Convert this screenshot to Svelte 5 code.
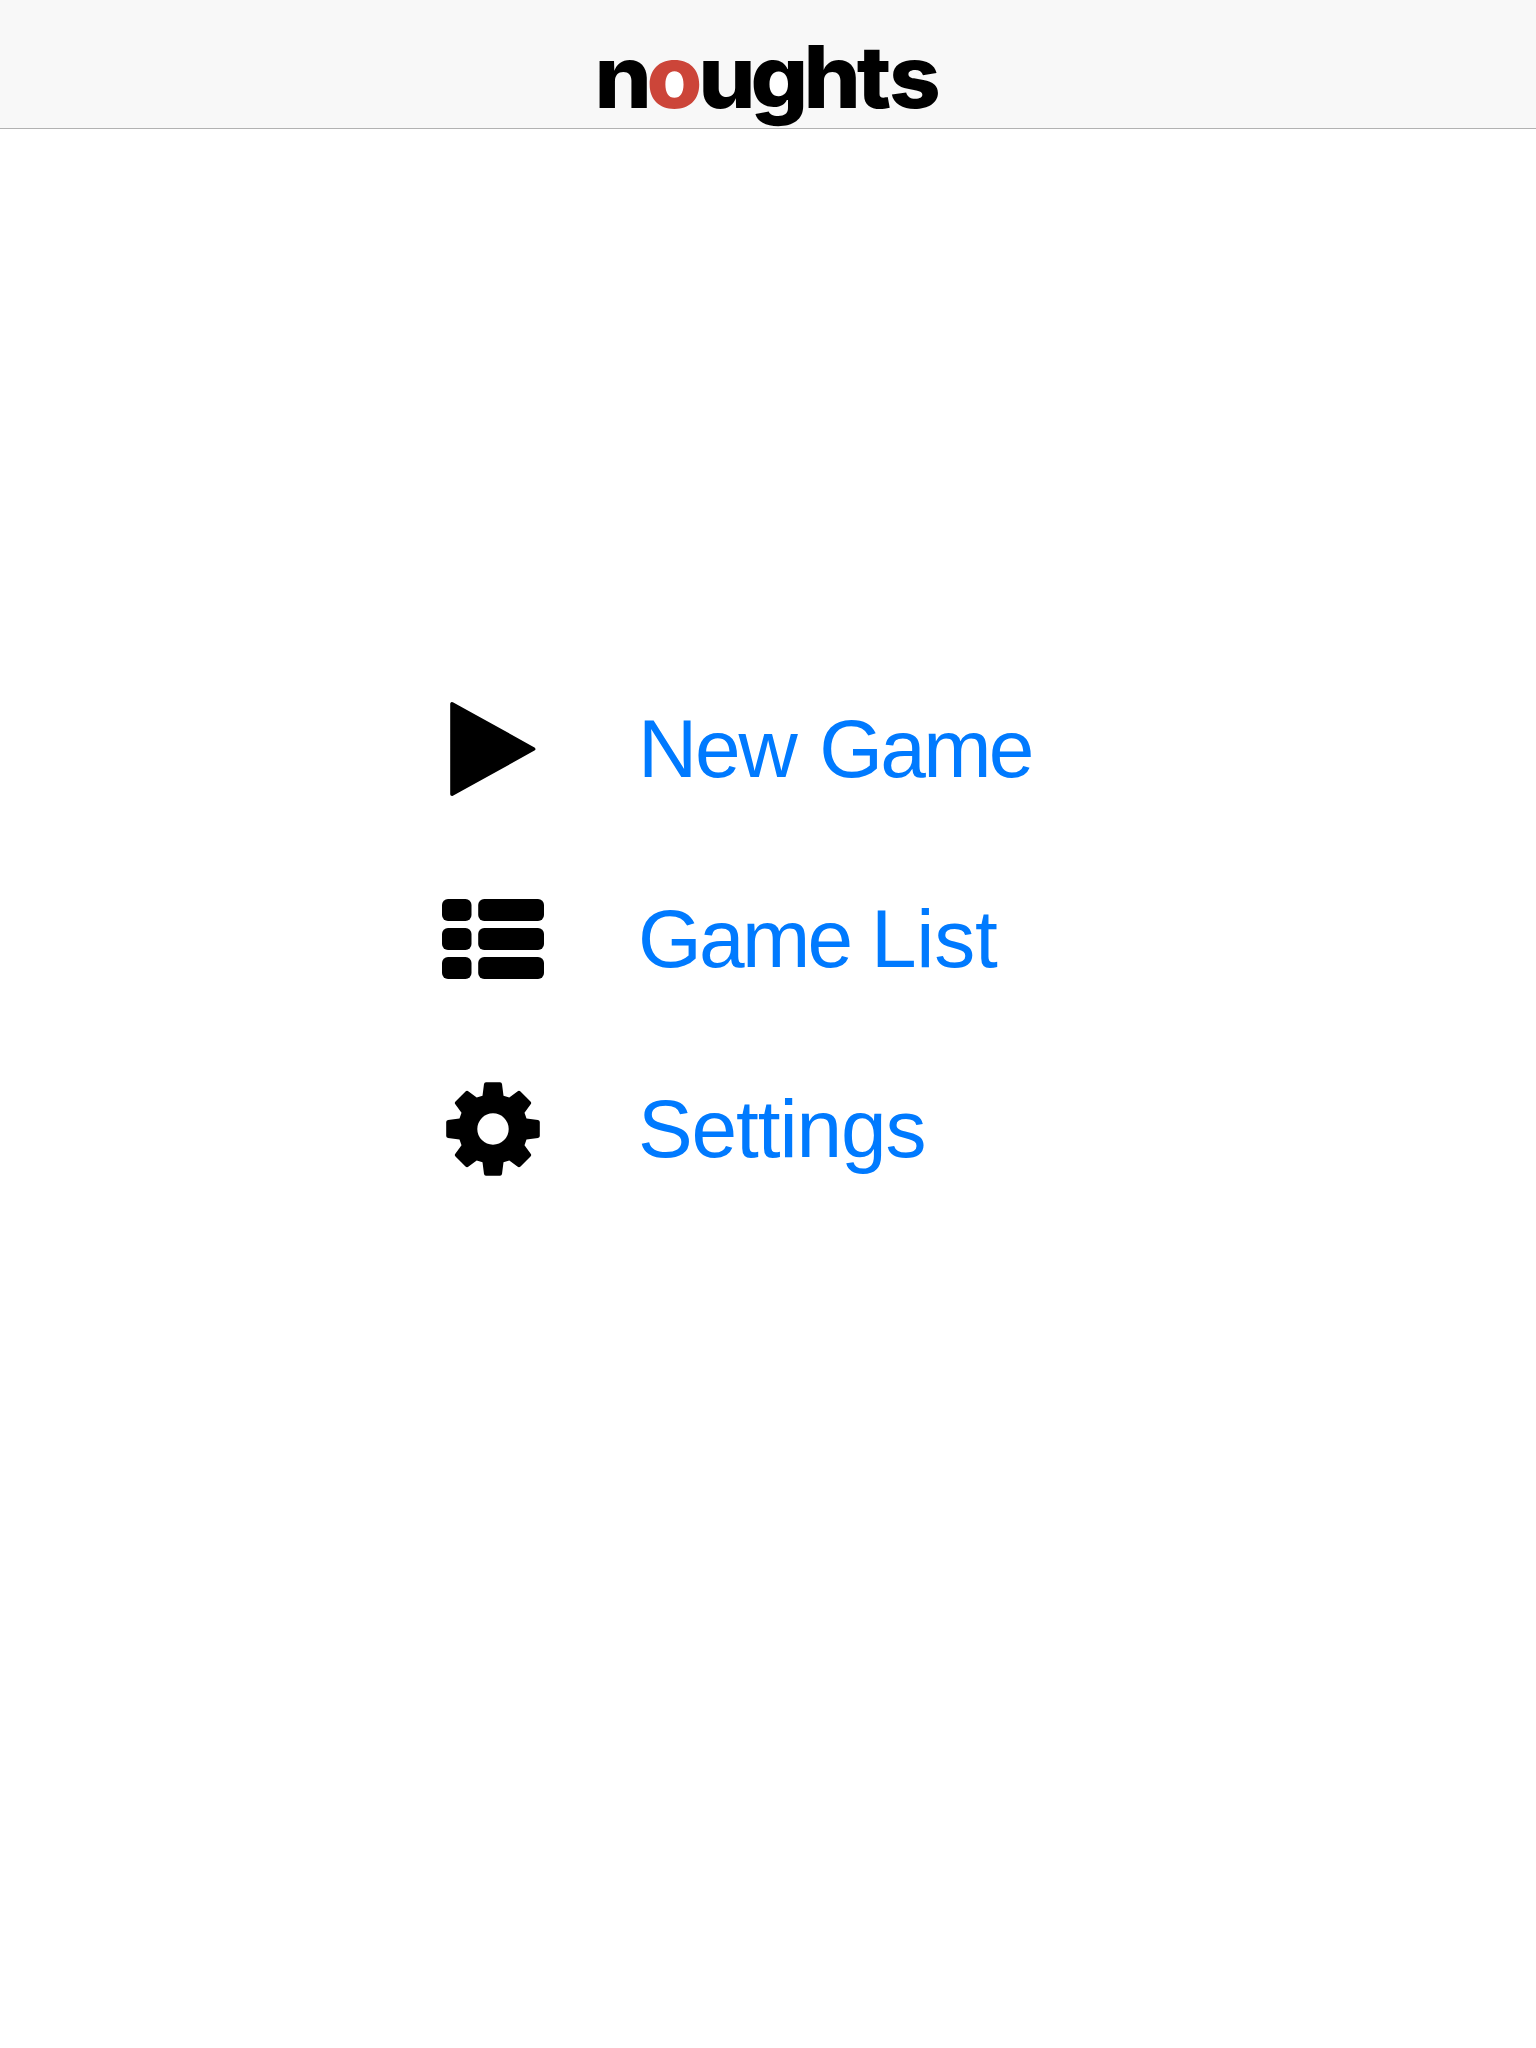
<script>
  // Left edges of the wordmark's letters, in the logo's own coordinates.
  const stretch = 1.05;
  const xs = [14.5, 66.5, 118.2, 170.5, 223.5, 276.8, 309].map((x) => x / stretch).join(' ');
  const items = [
    { words: ['New', 'Game'], icon: 'play' },
    { words: ['Game', 'List'], icon: 'list' },
    { words: ['Settings'], icon: 'gear' }
  ];
  const listRows = [-40, -11, 18];
</script>

<div class="page">
  <header>
    <svg class="logo" width="376" height="128" viewBox="0 0 376 128" role="img" aria-label="noughts">
      <ellipse cx="94.7" cy="84.5" rx="13" ry="15" fill="#fff" />
      <ellipse cx="197.5" cy="82.5" rx="12" ry="13" fill="#fff" />
      <text x={xs} y="108" transform="scale({stretch} 1)">n<tspan class="red">o</tspan>ughts</text>
    </svg>
  </header>
  <nav>
    {#each items as item}
      <a href="#{item.icon}">
        <svg class="icon" width="120" height="120" viewBox="-60 -60 120 120" aria-hidden="true">
          {#if item.icon === 'play'}
            <path d="M-41-45.2V45.2L40.6 0Z" stroke="#000" stroke-width="3.6" stroke-linejoin="round" />
          {:else if item.icon === 'list'}
            {#each listRows as y}
              <rect x="-51" {y} width="29.5" height="22" rx="6" />
              <rect x="-14.8" {y} width="65.8" height="22" rx="6" />
            {/each}
          {:else}
            <path
              fill-rule="evenodd"
              d="M-7-46.8H7Q8.7-46.8 9-45L10.5-33.3L16.3-31.5L24.4-37.5Q26-38.9 27.5-37.5L37.5-27.5Q38.9-26 37.5-24.4L31.5-16.3L33.5-10.5L45-9Q46.8-8.7 46.8-7V7Q46.8 8.7 45 9L33.5 10.5L31.5 16.3L37.5 24.4Q38.9 26 37.5 27.5L27.5 37.5Q26 38.9 24.4 37.5L16.3 31.5L10.5 33.3L9 45Q8.7 46.8 7 46.8H-7Q-8.7 46.8-9 45L-10.5 33.3L-16.3 31.5L-24.4 37.5Q-26 38.9-27.5 37.5L-37.5 27.5Q-38.9 26-37.5 24.4L-31.5 16.3L-33.5 10.5L-45 9Q-46.8 8.7-46.8 7V-7Q-46.8-8.7-45-9L-33.5-10.5L-31.5-16.3L-37.5-24.4Q-38.9-26-37.5-27.5L-27.5-37.5Q-26-38.9-24.4-37.5L-16.3-31.5L-10.5-33.3L-9-45Q-8.7-46.8-7-46.8ZM0-15.7A15.7 15.7 0 1 0 0 15.7A15.7 15.7 0 1 0 0-15.7Z"
            />
          {/if}
        </svg>
        <span class="label {item.icon}">
          {#each item.words as word, i}{i ? ' ' : ''}<span class={word.toLowerCase()}>{word}</span>{/each}
        </span>
      </a>
    {/each}
  </nav>
</div>

<style>
  :global(body) { margin: 0; background: #fff; }
  .page { width: 1536px; height: 2048px; background: #fff; overflow: hidden; }
  header {
    box-sizing: border-box;
    height: 129px;
    display: flex;
    justify-content: center;
    background: #f8f8f8;
    border-bottom: 1px solid #b2b2b2;
  }
  .logo { display: block; overflow: visible; }
  .logo text { font: 800 86px Inter, 'Liberation Sans', sans-serif; fill: #000; }
  .logo .red { fill: #cc4539; }
  nav { padding: 525px 0 0 433px; }
  a {
    display: flex;
    align-items: center;
    gap: 85px;
    width: max-content;
    height: 190px;
    color: #007aff;
    text-decoration: none;
    font: 82px/92px 'Liberation Sans', Arial, sans-serif;
    letter-spacing: -2px;
    white-space: nowrap;
  }
  .play { word-spacing: 3px; }
  .list { word-spacing: -2px; letter-spacing: -0.3px; }
  .new { letter-spacing: -2.2px; }
  .game { letter-spacing: -2.7px; }
  .settings { letter-spacing: -1.1px; }
  .icon { display: block; fill: #000; flex: none; }
</style>
